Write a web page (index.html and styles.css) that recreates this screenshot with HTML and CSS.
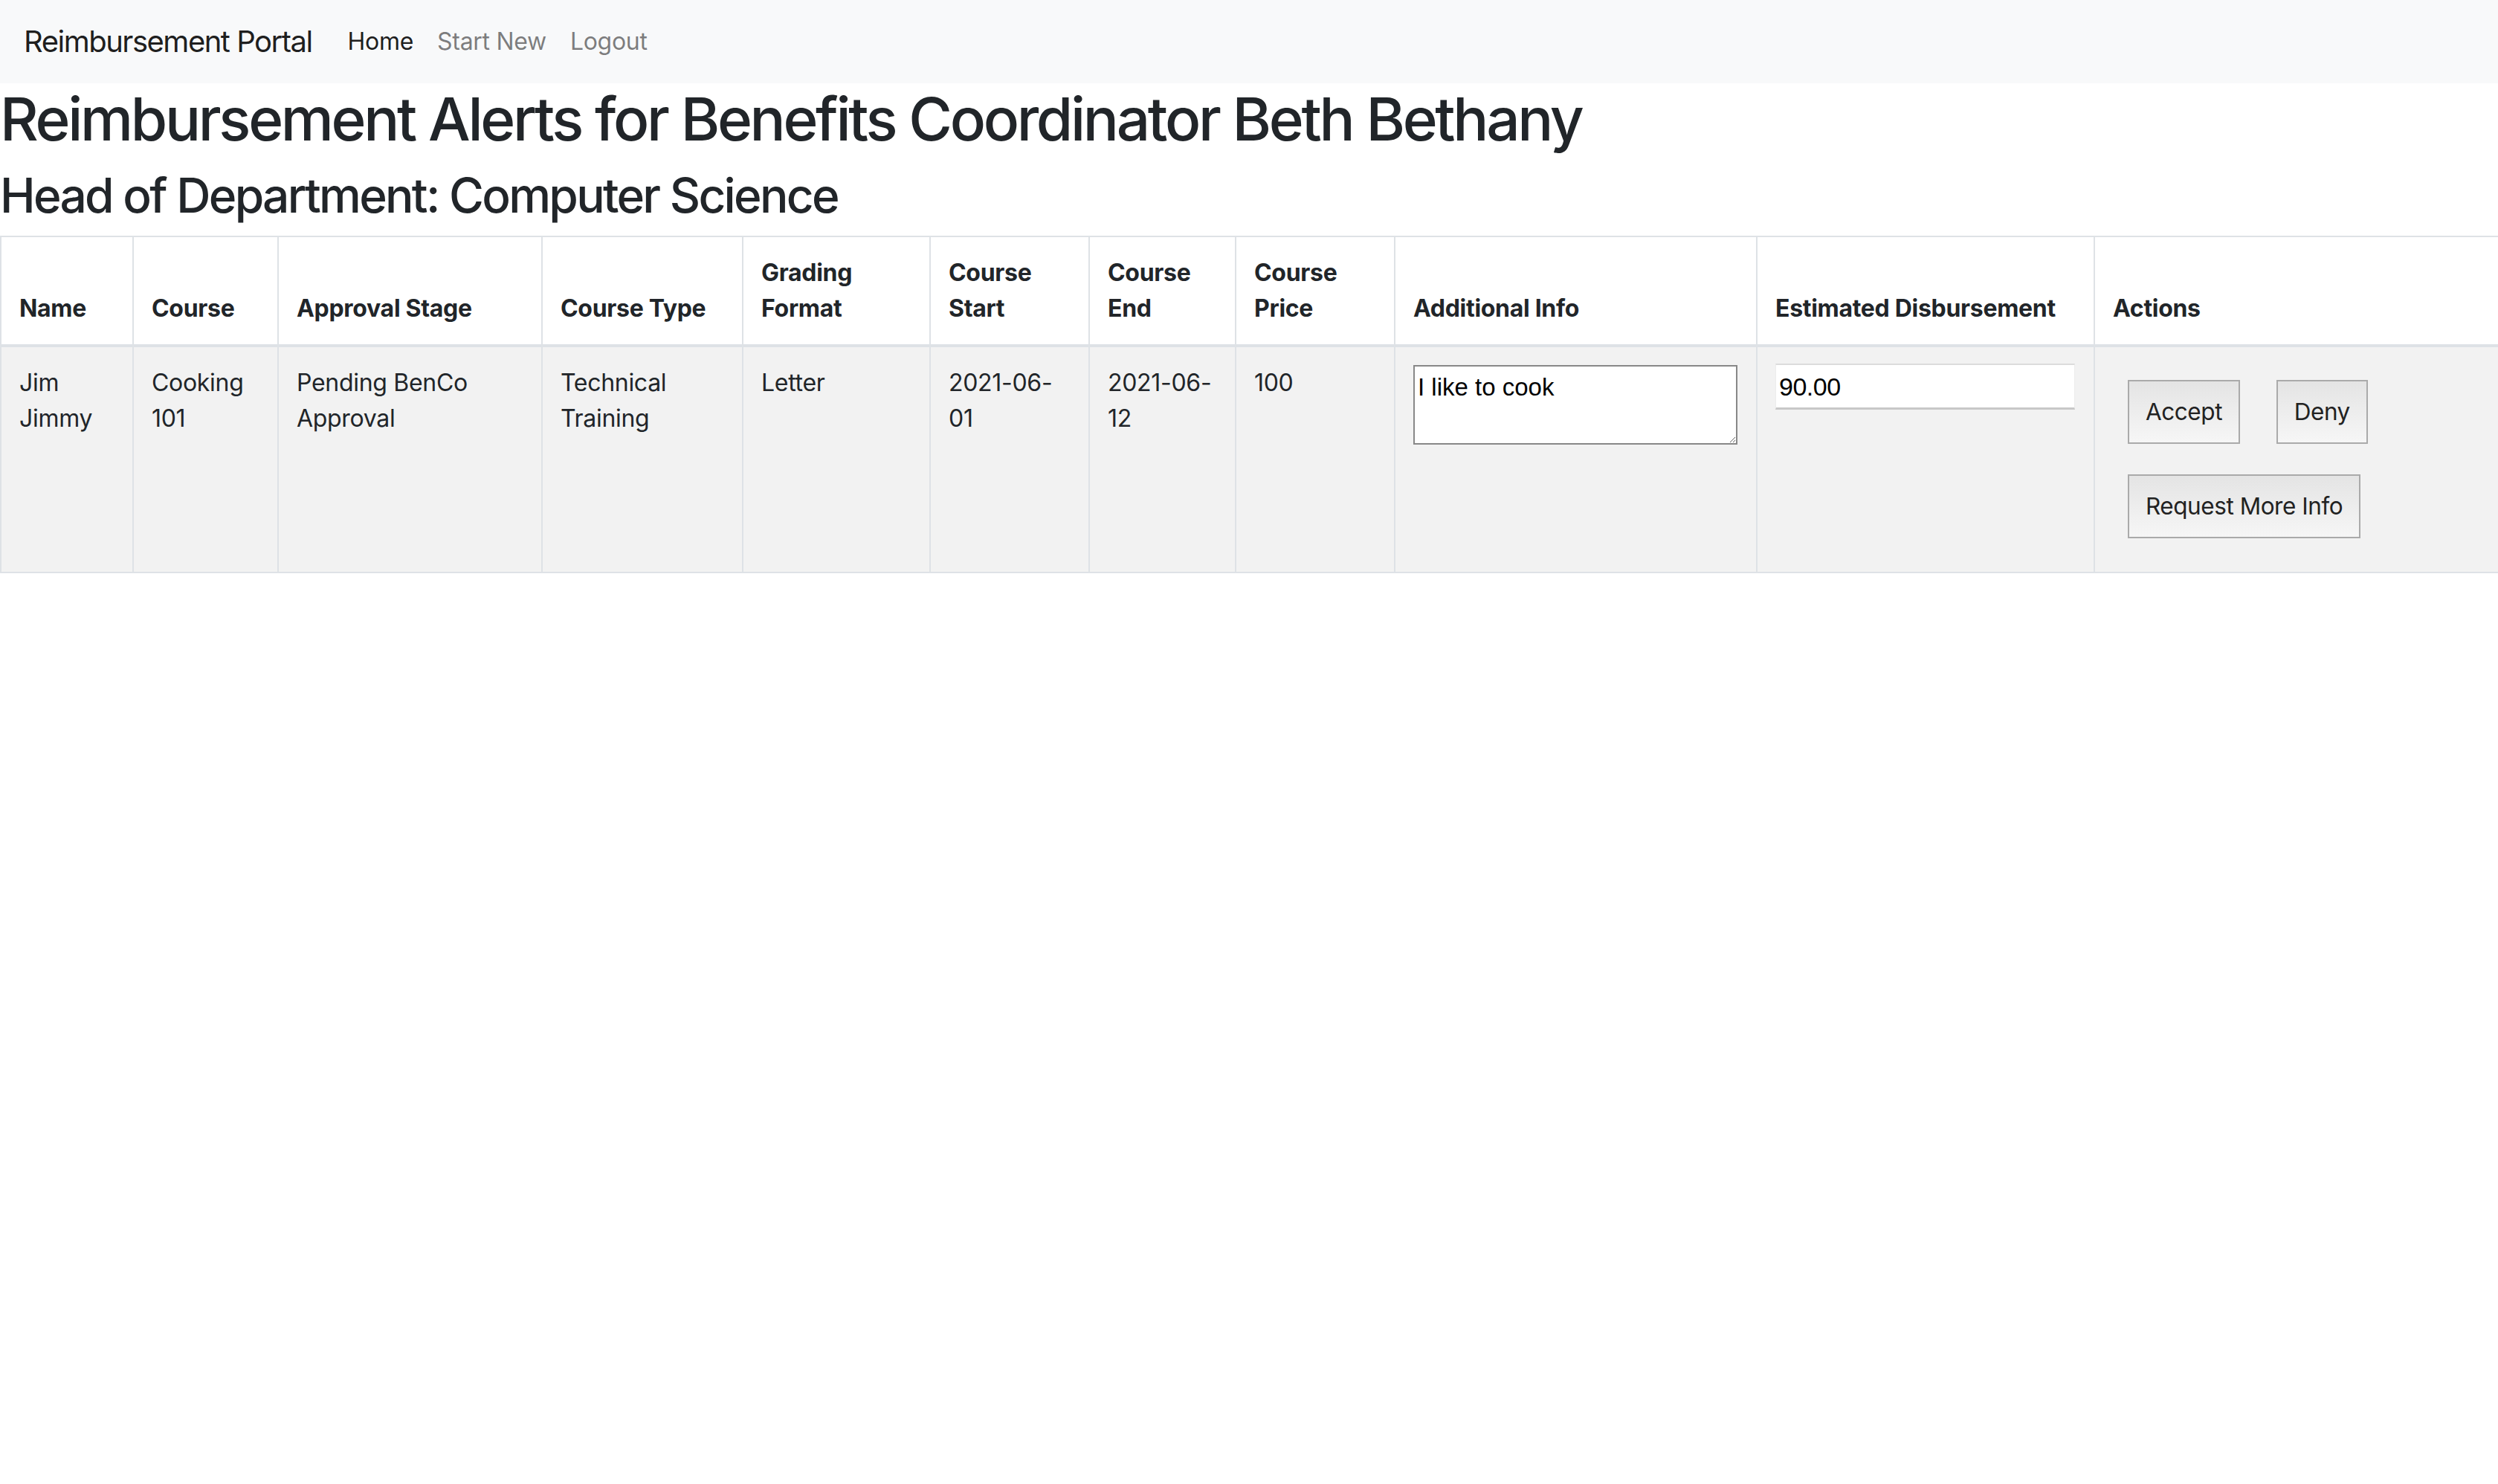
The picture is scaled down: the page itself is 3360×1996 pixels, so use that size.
FILE: index.html
```html
<!DOCTYPE html>
<html lang="en">
<head>
<meta charset="utf-8">
<title>Reimbursement Portal</title>
<link rel="stylesheet" href="styles.css">
</head>
<body>
<nav class="navbar">
  <a class="brand" href="#">Reimbursement Portal</a>
  <ul class="nav">
    <li><a class="nav-link active" href="#">Home</a></li>
    <li><a class="nav-link" href="#">Start New</a></li>
    <li><a class="nav-link" href="#">Logout</a></li>
  </ul>
</nav>
<h1 class="title">Reimbursement Alerts for Benefits Coordinator Beth Bethany</h1>
<h2 class="subtitle">Head of Department: Computer Science</h2>
<table class="alerts">
  <colgroup>
    <col class="c-name">
    <col class="c-course">
    <col class="c-stage">
    <col class="c-type">
    <col class="c-grading">
    <col class="c-start">
    <col class="c-end">
    <col class="c-price">
    <col class="c-info">
    <col class="c-disb">
    <col class="c-actions">
  </colgroup>
  <thead>
    <tr>
      <th>Name</th>
      <th>Course</th>
      <th>Approval Stage</th>
      <th>Course Type</th>
      <th>Grading Format</th>
      <th>Course Start</th>
      <th>Course End</th>
      <th>Course Price</th>
      <th>Additional Info</th>
      <th>Estimated Disbursement</th>
      <th>Actions</th>
    </tr>
  </thead>
  <tbody>
    <tr>
      <td>Jim Jimmy</td>
      <td>Cooking 101</td>
      <td>Pending BenCo Approval</td>
      <td>Technical Training</td>
      <td>Letter</td>
      <td>2021-06-01</td>
      <td>2021-06-12</td>
      <td>100</td>
      <td><textarea class="info" rows="2">I like to cook</textarea></td>
      <td><input class="amount" type="text" value="90.00"></td>
      <td class="actions"><button class="btn">Accept</button> <button class="btn">Deny</button> <button class="btn">Request More Info</button></td>
    </tr>
  </tbody>
</table>
</body>
</html>
```
FILE: styles.css
```css
html, body {
  margin: 0;
  padding: 0;
  background: #fff;
}
body {
  font-family: Inter, "Noto Sans", sans-serif;
  font-size: 32px;
  line-height: 48px;
  color: #212529;
  letter-spacing: -0.3px;
}
.navbar {
  display: flex;
  align-items: center;
  background: #f8f9fa;
  padding: 16px 32px;
}
.brand {
  font-size: 40px;
  line-height: 60px;
  padding: 10px 0;
  margin-right: 32px;
  color: rgba(0, 0, 0, 0.9);
  text-decoration: none;
  letter-spacing: -1.5px;
}
.nav {
  display: flex;
  list-style: none;
  margin: 0;
  padding: 0;
}
.nav-link {
  display: block;
  padding: 16px 16px;
  color: rgba(0, 0, 0, 0.5);
  text-decoration: none;
}
.nav-link.active {
  color: rgba(0, 0, 0, 0.9);
}
.title {
  font-size: 80px;
  line-height: 96px;
  font-weight: 500;
  margin: 0 0 16px;
  letter-spacing: -3.3px;
}
.subtitle {
  font-size: 64px;
  line-height: 77px;
  font-weight: 500;
  margin: 0 0 16px;
  letter-spacing: -2.7px;
}
.alerts {
  width: 100%;
  table-layout: fixed;
  border-collapse: collapse;
}
.c-name { width: 178px; }
.c-course { width: 195px; }
.c-stage { width: 355px; }
.c-type { width: 270px; }
.c-grading { width: 252px; }
.c-start { width: 214px; }
.c-end { width: 197px; }
.c-price { width: 214px; }
.c-info { width: 487px; }
.c-disb { width: 454px; }
.c-actions { width: 544px; }
.alerts th,
.alerts td {
  border: 2px solid #dee2e6;
  padding: 24px;
  text-align: left;
}
.alerts th {
  vertical-align: bottom;
  font-weight: 700;
  border-bottom-width: 4px;
}
.alerts td {
  vertical-align: top;
}
.alerts tbody tr {
  background: #f2f2f2;
}
.info {
  display: block;
  box-sizing: border-box;
  width: 436px;
  height: 107px;
  margin: 0;
  padding: 6px 4px 2px;
  border: 2px solid #888;
  font-family: "Liberation Sans", Arial, sans-serif;
  font-size: 33px;
  line-height: 44px;
  color: #000;
  background: #fff;
  resize: both;
  letter-spacing: 0;
}
.amount {
  display: block;
  box-sizing: border-box;
  width: 403px;
  height: 62px;
  margin: -2px 0 0;
  padding: 2px 4px 0;
  border: none;
  border-top: 2px solid #dcdcdc;
  border-bottom: 3px solid #c8c8c8;
  border-left: 1px solid #ececec;
  border-right: 1px solid #ececec;
  font-family: "Liberation Sans", Arial, sans-serif;
  font-size: 34px;
  color: #000;
  background: #fff;
  letter-spacing: -0.5px;
}
.actions {
  line-height: 0;
}
.btn {
  display: inline-block;
  margin: 20px 20px 21px;
  padding: 0 22px;
  height: 86px;
  border: 2px solid #aaa;
  background: linear-gradient(#e4e4e4, #f6f6f6);
  font-family: Inter, "Noto Sans", sans-serif;
  font-size: 31.5px;
  line-height: 44px;
  color: #222;
  letter-spacing: -0.45px;
  vertical-align: top;
}
```
